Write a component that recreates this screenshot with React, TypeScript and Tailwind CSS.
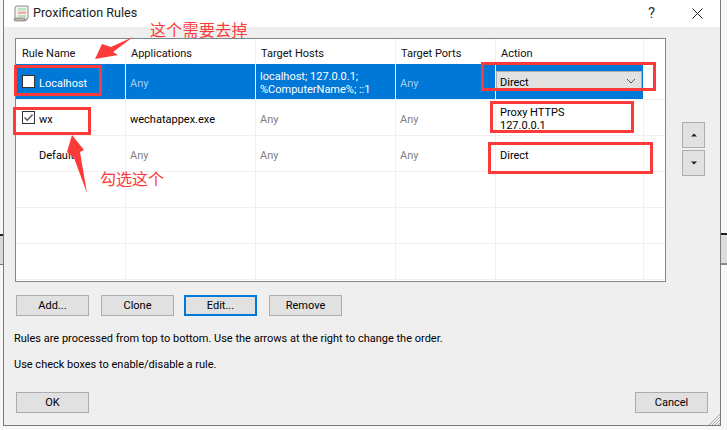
import React from "react";

const F = 'font-["Roboto","Liberation_Sans",sans-serif]';
const CJK = 'font-["Noto_Sans_CJK_SC",sans-serif]';

const COLS = [
  "w-[110px]",
  "w-[130px]",
  "w-[140px]",
  "w-[100px]",
  "w-[148px]",
  "w-[21px]",
];

function Cell({ col, selected, className = "", children }: { col: number; selected?: boolean; className?: string; children?: React.ReactNode }) {
  const blue = selected && col < 5;
  return (
    <div
      className={`${COLS[col]} shrink-0 flex items-center border-r ${
        blue ? "bg-[#0078d7] border-white" : "bg-white border-[#f0f0f0]"
      } ${col === 5 ? "border-r-0" : ""} ${className}`}
    >
      {children}
    </div>
  );
}

function Any({ selected }: { selected?: boolean }) {
  return <span className={`pt-[3px] ${selected ? "text-[#a8cdf0]" : "text-[#808080]"}`}>Any</span>;
}

function Txt({ children }: { children: React.ReactNode }) {
  return <span className="pt-[3px]">{children}</span>;
}

function Check({ checked }: { checked?: boolean }) {
  return (
    <span className="w-[13px] h-[13px] shrink-0 border border-[#333] bg-white flex items-center justify-center">
      {checked && (
        <svg width="11" height="11" viewBox="0 0 11 11" fill="none">
          <path d="M1.5 5.5 L4.2 8.2 L9.6 2.4" stroke="#555" strokeWidth="1.4" />
        </svg>
      )}
    </span>
  );
}

function Row({ children }: { children: React.ReactNode }) {
  return <div className="flex h-[36px] shrink-0 border-b border-[#f0f0f0] text-[11px] leading-[13px]">{children}</div>;
}

function Btn({ label, focused }: { label: string; focused?: boolean }) {
  return (
    <button
      className={`w-[73px] h-[21px] bg-[#e1e1e1] text-[11px] leading-none text-[#000] flex items-center justify-center ${
        focused ? "border-2 border-[#0078d7]" : "border border-[#adadad]"
      }`}
    >
      {label}
    </button>
  );
}

function SideBtn({ down }: { down?: boolean }) {
  return (
    <button className="w-[23px] h-[26px] bg-[#e1e1e1] border border-[#adadad] flex items-center justify-center">
      <svg width="6" height="4" viewBox="0 0 6 4">
        <path d={down ? "M0 0.5 H6 L3 3.5 Z" : "M0 3.5 H6 L3 0.5 Z"} fill="#222" />
      </svg>
    </button>
  );
}

function RedBox({ className }: { className: string }) {
  return <div className={`absolute border-[3px] border-[#fc3a3a] ${className}`} />;
}

export default function App() {
  return (
    <div className={`relative w-[727px] h-[430px] overflow-hidden bg-[#f7f7f7] pl-[3px] pr-[6px] pb-[4px] ${F}`}>
      {/* window behind */}
      <div className="absolute left-0 top-[234px] w-[3px] h-[31px] bg-[#d8d8d8] border-t-2 border-b border-t-[#222] border-b-[#777]" />
      <div className="absolute right-0 top-[233px] w-[6px] h-[32px] bg-[#dcdcdc] border-t-2 border-b-2 border-t-[#222] border-b-[#888]" />

      <div className="relative h-full flex flex-col bg-[#efefef] border-l border-r border-b border-[#7a7a7a]">
        {/* title bar */}
        <div className="h-[27px] shrink-0 bg-white flex items-center pl-[9px]">
          <svg width="16" height="17" viewBox="0 0 16 17" className="shrink-0">
            <path d="M3 1 H15 V13 H14 V15 H2 V3 Z" fill="#f3f3ee" stroke="#8b8b84" />
            <path d="M1 15 Q1 13 3 13 H12 Q11 15 12.5 16 H2.5 Q1 16 1 15 Z" fill="#b9b9b2" stroke="#77776f" strokeWidth="0.7" />
            <rect x="5" y="3" width="8" height="2.5" fill="#b9e4b8" />
            <rect x="5" y="6.5" width="8" height="2.5" fill="#f2aeb0" />
            <rect x="5" y="10" width="8" height="2" fill="#b9e4b8" />
          </svg>
          <span className="ml-[4px] text-[12.6px] leading-none text-[#222]">Proxification Rules</span>
          <div className="ml-auto flex items-center">
            <span className="text-[15px] leading-none text-[#333] mr-[37px]">?</span>
            <svg width="11" height="11" viewBox="0 0 11 11" className="mr-[17px]">
              <path d="M0.5 0.5 L10.5 10.5 M10.5 0.5 L0.5 10.5" stroke="#222" strokeWidth="1" />
            </svg>
          </div>
        </div>

        {/* table + order buttons */}
        <div className="flex pt-[11px] pl-[11px]">
          <div className="w-[651px] h-[244px] shrink-0 border border-[#80868f] bg-white flex flex-col overflow-hidden">
            <div className="flex h-[25px] shrink-0 text-[11px] text-[#111] leading-[13px]">
              <Cell col={0} className="pl-[6px]"><Txt>Rule Name</Txt></Cell>
              <Cell col={1} className="pl-[5px]"><Txt>Applications</Txt></Cell>
              <Cell col={2} className="pl-[5px]"><Txt>Target Hosts</Txt></Cell>
              <Cell col={3} className="pl-[5px]"><Txt>Target Ports</Txt></Cell>
              <Cell col={4} className="pl-[5px]"><Txt>Action</Txt></Cell>
              <Cell col={5} />
            </div>
            <Row>
              <Cell col={0} selected className="pl-[6px] gap-[4px] text-white">
                <Check />
                <Txt>Localhost</Txt>
              </Cell>
              <Cell col={1} selected className="pl-[4px]"><Any selected /></Cell>
              <Cell col={2} selected className="pl-[4px] text-white">
                <Txt>localhost; 127.0.0.1;<br />%ComputerName%; ::1</Txt>
              </Cell>
              <Cell col={3} selected className="pl-[4px]"><Any selected /></Cell>
              <Cell col={4} selected className="items-start pt-[7px]">
                <div className="w-[146px] h-[20px] bg-[#e1e1e1] border border-[#adadad] flex items-center justify-between pl-[3px] pr-[5px] text-[#000]">
                  <Txt>Direct</Txt>
                  <svg width="10" height="6" viewBox="0 0 10 6" fill="none">
                    <path d="M1 1 L5 5 L9 1" stroke="#555" />
                  </svg>
                </div>
              </Cell>
              <Cell col={5} />
            </Row>
            <Row>
              <Cell col={0} className="pl-[6px] gap-[4px] text-[#000]">
                <Check checked />
                <Txt>wx</Txt>
              </Cell>
              <Cell col={1} className="pl-[4px] text-[#000]"><Txt>wechatappex.exe</Txt></Cell>
              <Cell col={2} className="pl-[4px]"><Any /></Cell>
              <Cell col={3} className="pl-[4px]"><Any /></Cell>
              <Cell col={4} className="pl-[4px] text-[#000]">
                <Txt>Proxy HTTPS<br />127.0.0.1</Txt>
              </Cell>
              <Cell col={5} />
            </Row>
            <Row>
              <Cell col={0} className="pl-[23px] text-[#000]"><Txt>Default</Txt></Cell>
              <Cell col={1} className="pl-[4px]"><Any /></Cell>
              <Cell col={2} className="pl-[4px]"><Any /></Cell>
              <Cell col={3} className="pl-[4px]"><Any /></Cell>
              <Cell col={4} className="pl-[4px] text-[#000]"><Txt>Direct</Txt></Cell>
              <Cell col={5} />
            </Row>
            {[0, 1, 2].map((i) => (
              <Row key={i}>
                {[0, 1, 2, 3, 4, 5].map((c) => (
                  <Cell key={c} col={c} />
                ))}
              </Row>
            ))}
          </div>
          <div className="ml-[16px] pt-[84px] flex flex-col gap-[2px]">
            <SideBtn />
            <SideBtn down />
          </div>
        </div>

        {/* action buttons */}
        <div className="flex mt-[13px] ml-[12px]">
          <Btn label="Add..." />
          <div className="ml-[12px]"><Btn label="Clone" /></div>
          <div className="ml-[10px]"><Btn label="Edit..." focused /></div>
          <div className="ml-[12px]"><Btn label="Remove" /></div>
        </div>

        <p className="mt-[16px] ml-[10px] text-[11px] leading-[14px] text-[#000]">
          Rules are processed from top to bottom. Use the arrows at the right to change the order.
        </p>
        <p className="mt-[12px] ml-[10px] text-[11px] leading-[14px] text-[#000]">
          Use check boxes to enable/disable a rule.
        </p>

        <div className="mt-auto flex justify-between pl-[12px] pr-[12px] pb-[12px]">
          <Btn label="OK" />
          <Btn label="Cancel" />
        </div>

        {/* resize grip */}
        <svg width="12" height="12" viewBox="0 0 12 12" className="absolute right-0 bottom-0">
          <path d="M1 12 L12 1 M4 12 L12 4 M7 12 L12 7 M10 12 L12 10" stroke="#a8a8a8" strokeWidth="1" />
        </svg>
      </div>

      {/* annotations painted over the screenshot */}
      <RedBox className="left-[14px] top-[65px] w-[88px] h-[31px]" />
      <RedBox className="left-[13px] top-[107px] w-[78px] h-[28px]" />
      <RedBox className="left-[481px] top-[62px] w-[175px] h-[29px]" />
      <RedBox className="left-[490px] top-[101px] w-[144px] h-[32px]" />
      <RedBox className="left-[488px] top-[142px] w-[165px] h-[32px]" />
      <svg width="727" height="430" viewBox="0 0 727 430" className="absolute left-0 top-0 pointer-events-none">
        <polygon points="133,37 111,47 102,44 95,59 118,55 113,52" fill="#fc3a3a" />
        <polygon points="72,135 84,150 80,152 87,193 74,158 67,152" fill="#fc3a3a" />
      </svg>
      <span className={`absolute left-[150px] top-[18px] text-[16px] tracking-[0.3px] leading-[22px] text-[#fc3a3a] ${CJK}`}>这个需要去掉</span>
      <span className={`absolute left-[100px] top-[167px] text-[16px] leading-[22px] text-[#fc3a3a] ${CJK}`}>勾选这个</span>
    </div>
  );
}
